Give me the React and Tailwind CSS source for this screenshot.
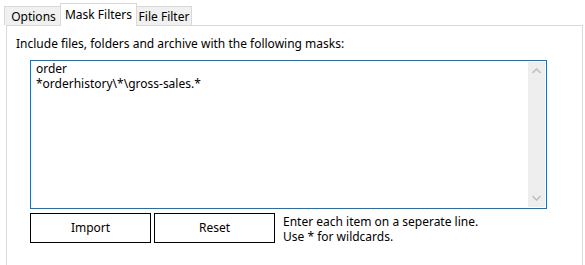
export default function App() {
  const font = { fontFamily: '"Noto Sans", "Segoe UI", sans-serif' };
  return (
    <div className="w-[585px] h-[265px] bg-white overflow-hidden flex flex-col text-[12px] text-black" style={font}>
      <div className="flex items-end h-[25px] pl-[4px] shrink-0">
        <div className="w-[57px] h-[19px] border border-b-0 border-[#d9d9d9] bg-[#f0f0f0] flex items-center justify-center leading-none pt-[1px] pl-[2px]">Options</div>
        <div className="relative z-10 -mb-px w-[77px] h-[23px] border border-b-0 border-[#d9d9d9] bg-white flex items-center justify-center leading-none -ml-px -mr-px pb-[1px]">Mask Filters</div>
        <div className="w-[56px] h-[19px] border border-b-0 border-l-0 border-[#d9d9d9] bg-[#f0f0f0] flex items-center justify-center leading-none pt-[1px] pl-[1px]">File Filter</div>
      </div>
      <div className="ml-[6px] w-[577px] h-[260px] shrink-0 border border-[#d9d9d9] bg-white pl-[9px] pt-[10px]">
        <div className="leading-[15px]">Include files, folders and archive with the following masks:</div>
        <div className="ml-[14px] mt-[9px] w-[517px] h-[149px] border border-[#0078d7] flex">
          <div className="flex-1 pl-[5px] leading-[15px] whitespace-pre">{"order\n*orderhistory\\*\\gross-sales.*"}</div>
          <div className="w-[17px] my-px mr-px bg-[#eeeeee] flex flex-col justify-between items-center py-[6px]">
            <svg width="9" height="6" viewBox="0 0 9 6"><polyline points="0.5,5 4.5,1 8.5,5" fill="none" stroke="#c1c1c1" strokeWidth="1.6" /></svg>
            <svg width="9" height="6" viewBox="0 0 9 6"><polyline points="0.5,1 4.5,5 8.5,1" fill="none" stroke="#c1c1c1" strokeWidth="1.6" /></svg>
          </div>
        </div>
        <div className="ml-[14px] mt-[4px] flex items-start">
          <button className="w-[121px] h-[30px] border border-black bg-white flex items-center justify-center">Import</button>
          <button className="ml-[3px] w-[121px] h-[30px] border border-black bg-white flex items-center justify-center">Reset</button>
          <div className="ml-[8px] pt-[1px] leading-[15px] whitespace-pre">{"Enter each item on a seperate line.\nUse * for wildcards."}</div>
        </div>
      </div>
    </div>
  );
}
